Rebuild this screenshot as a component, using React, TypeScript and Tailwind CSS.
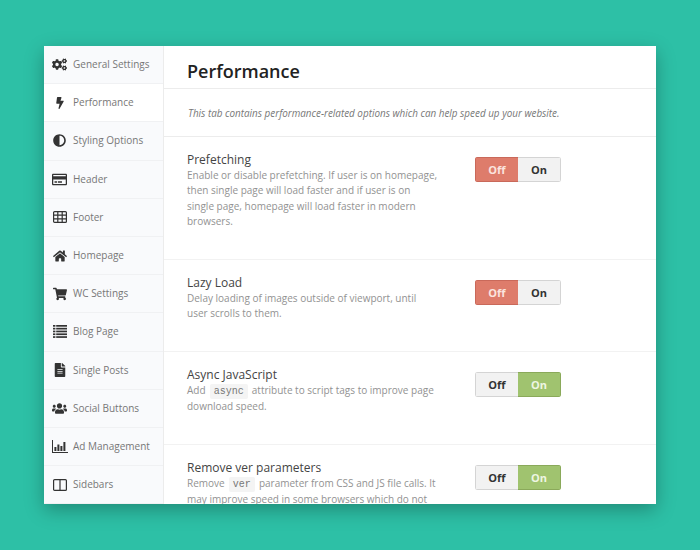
import type { ReactNode } from 'react'
import {
  FaAdjust,
  FaBolt,
  FaCogs,
  FaFileAlt,
  FaHome,
  FaRegCreditCard,
  FaShoppingCart,
  FaUsers,
} from 'react-icons/fa'

function TableIcon() {
  return (
    <svg width="14" height="12" viewBox="0 0 14 12" fill="none" stroke="currentColor" strokeWidth="1.2">
      <rect x="0.6" y="0.6" width="12.8" height="10.8" rx="1" />
      <path d="M0.6 4.2h12.8M0.6 7.8h12.8M4.8 0.6v10.8M9.2 0.6v10.8" />
    </svg>
  )
}

function ListIcon() {
  return (
    <svg width="14" height="13" viewBox="0 0 14 13" fill="currentColor">
      <rect x="0" y="0" width="2.4" height="1.7" />
      <rect x="3.2" y="0" width="10.8" height="1.7" />
      <rect x="0" y="2.8" width="2.4" height="1.7" />
      <rect x="3.2" y="2.8" width="10.8" height="1.7" />
      <rect x="0" y="5.6" width="2.4" height="1.7" />
      <rect x="3.2" y="5.6" width="10.8" height="1.7" />
      <rect x="0" y="8.4" width="2.4" height="1.7" />
      <rect x="3.2" y="8.4" width="10.8" height="1.7" />
      <rect x="0" y="11.2" width="2.4" height="1.7" />
      <rect x="3.2" y="11.2" width="10.8" height="1.7" />
    </svg>
  )
}

function BarsIcon() {
  return (
    <svg width="16" height="13" viewBox="0 0 16 13" fill="currentColor">
      <path d="M0 0h1v12h15v1H0z" />
      <rect x="2.4" y="7" width="2" height="4" />
      <rect x="5.4" y="4.5" width="2" height="6.5" />
      <rect x="8.4" y="6" width="2" height="5" />
      <rect x="11.4" y="2" width="2" height="9" />
    </svg>
  )
}

function ColumnsIcon() {
  return (
    <svg width="14" height="12" viewBox="0 0 14 12" fill="none" stroke="currentColor" strokeWidth="1.2">
      <rect x="0.6" y="0.6" width="12.8" height="10.8" rx="1" />
      <path d="M7 0.6v10.8" />
    </svg>
  )
}

const navItems = [
  { label: 'General Settings', icon: <FaCogs size={15} /> },
  { label: 'Performance', icon: <FaBolt size={12} /> },
  { label: 'Styling Options', icon: <FaAdjust size={13} /> },
  { label: 'Header', icon: <FaRegCreditCard size={15} /> },
  { label: 'Footer', icon: <TableIcon /> },
  { label: 'Homepage', icon: <FaHome size={14} /> },
  { label: 'WC Settings', icon: <FaShoppingCart size={14} /> },
  { label: 'Blog Page', icon: <ListIcon /> },
  { label: 'Single Posts', icon: <FaFileAlt size={14} /> },
  { label: 'Social Buttons', icon: <FaUsers size={15} /> },
  { label: 'Ad Management', icon: <BarsIcon /> },
  { label: 'Sidebars', icon: <ColumnsIcon /> },
]

function Code({ children }: { children: ReactNode }) {
  return (
    <code className="mx-[1.5px] inline-block rounded-[2px] bg-[#f4f4f4] px-[4px] font-['Liberation_Mono',monospace] text-[10px] leading-[15px] text-[#777]">
      {children}
    </code>
  )
}

function Toggle({ on }: { on: boolean }) {
  return (
    <div className="flex h-[25px] w-[86px] shrink-0 overflow-hidden rounded-[3px] text-[11px] leading-[23px] font-bold">
      <div
        className={
          on
            ? 'w-[43px] border border-r-0 border-[#d4d4d4] bg-[#f2f2f2] text-center text-[#333]'
            : 'w-[43px] border border-r-0 border-[#c9695a] bg-[#de7c6b] text-center text-[#fbe4df]'
        }
      >
        Off
      </div>
      <div
        className={
          on
            ? 'w-[43px] border border-l-0 border-[#8aa95a] bg-[#a0c36f] text-center text-[#eef6e2]'
            : 'w-[43px] border border-l-0 border-[#d4d4d4] bg-[#f2f2f2] text-center text-[#333]'
        }
      >
        On
      </div>
    </div>
  )
}

function Option({ title, on, height, children }: { title: string; on: boolean; height: string; children: ReactNode }) {
  return (
    <div className={`${height} flex shrink-0 items-start justify-between border-b border-[#f2f2f2] pt-[14px] pr-[95px] pl-[23px]`}>
      <div className="w-[252px]">
        <div className="text-[12px] leading-[17px] text-[#444]">{title}</div>
        <div className="text-[10px] leading-[15.4px] text-[#929292]">{children}</div>
      </div>
      <div className="mt-[6px]">
        <Toggle on={on} />
      </div>
    </div>
  )
}

export default function App() {
  return (
    <div className="flex h-[550px] w-[700px] items-start bg-[#2dc0a6] pt-[46px] pl-[44px] font-['Open_Sans',sans-serif]">
      <div className="flex h-[458px] w-[612px] overflow-hidden bg-white shadow-[0_6px_18px_rgba(0,0,0,0.28)]">
        {/* Sidebar */}
        <div className="w-[120px] shrink-0 border-r border-[#ececec] bg-[#f9fafc]">
          {navItems.map((item) => (
            <div
              key={item.label}
              className={`flex h-[38.2px] items-center border-b border-[#f0f1f3] ${item.label === 'Performance' ? 'bg-white' : ''}`}
            >
              <span className="flex w-[29px] shrink-0 justify-center pl-[2px] text-[#333]">{item.icon}</span>
              <span className="text-[10px] whitespace-nowrap text-[#777]">{item.label}</span>
            </div>
          ))}
        </div>

        {/* Content */}
        <div className="flex min-w-0 flex-1 flex-col">
          <div className="h-[43px] shrink-0 border-b border-[#ececec] pl-[23px] text-[18px] leading-[50px] font-semibold text-[#222]">
            Performance
          </div>
          <div className="h-[48px] shrink-0 border-b border-[#ececec] pl-[24px] text-[9.9px] leading-[49px] text-[#777] italic">
            This tab contains performance-related options which can help speed up your website.
          </div>
          <Option title="Prefetching" on={false} height="h-[123px]">
            Enable or disable prefetching. If user is on homepage, then single page will load faster and if user is on
            single page, homepage will load faster in modern browsers.
          </Option>
          <Option title="Lazy Load" on={false} height="h-[92px]">
            Delay loading of images outside of viewport, until user scrolls to them.
          </Option>
          <Option title="Async JavaScript" on height="h-[93px]">
            Add <Code>async</Code> attribute to script tags to improve page download speed.
          </Option>
          <Option title="Remove ver parameters" on height="h-[92px]">
            Remove <Code>ver</Code> parameter from CSS and JS file calls. It may improve speed in some browsers which do
            not cache files with query strings.
          </Option>
        </div>
      </div>
    </div>
  )
}
